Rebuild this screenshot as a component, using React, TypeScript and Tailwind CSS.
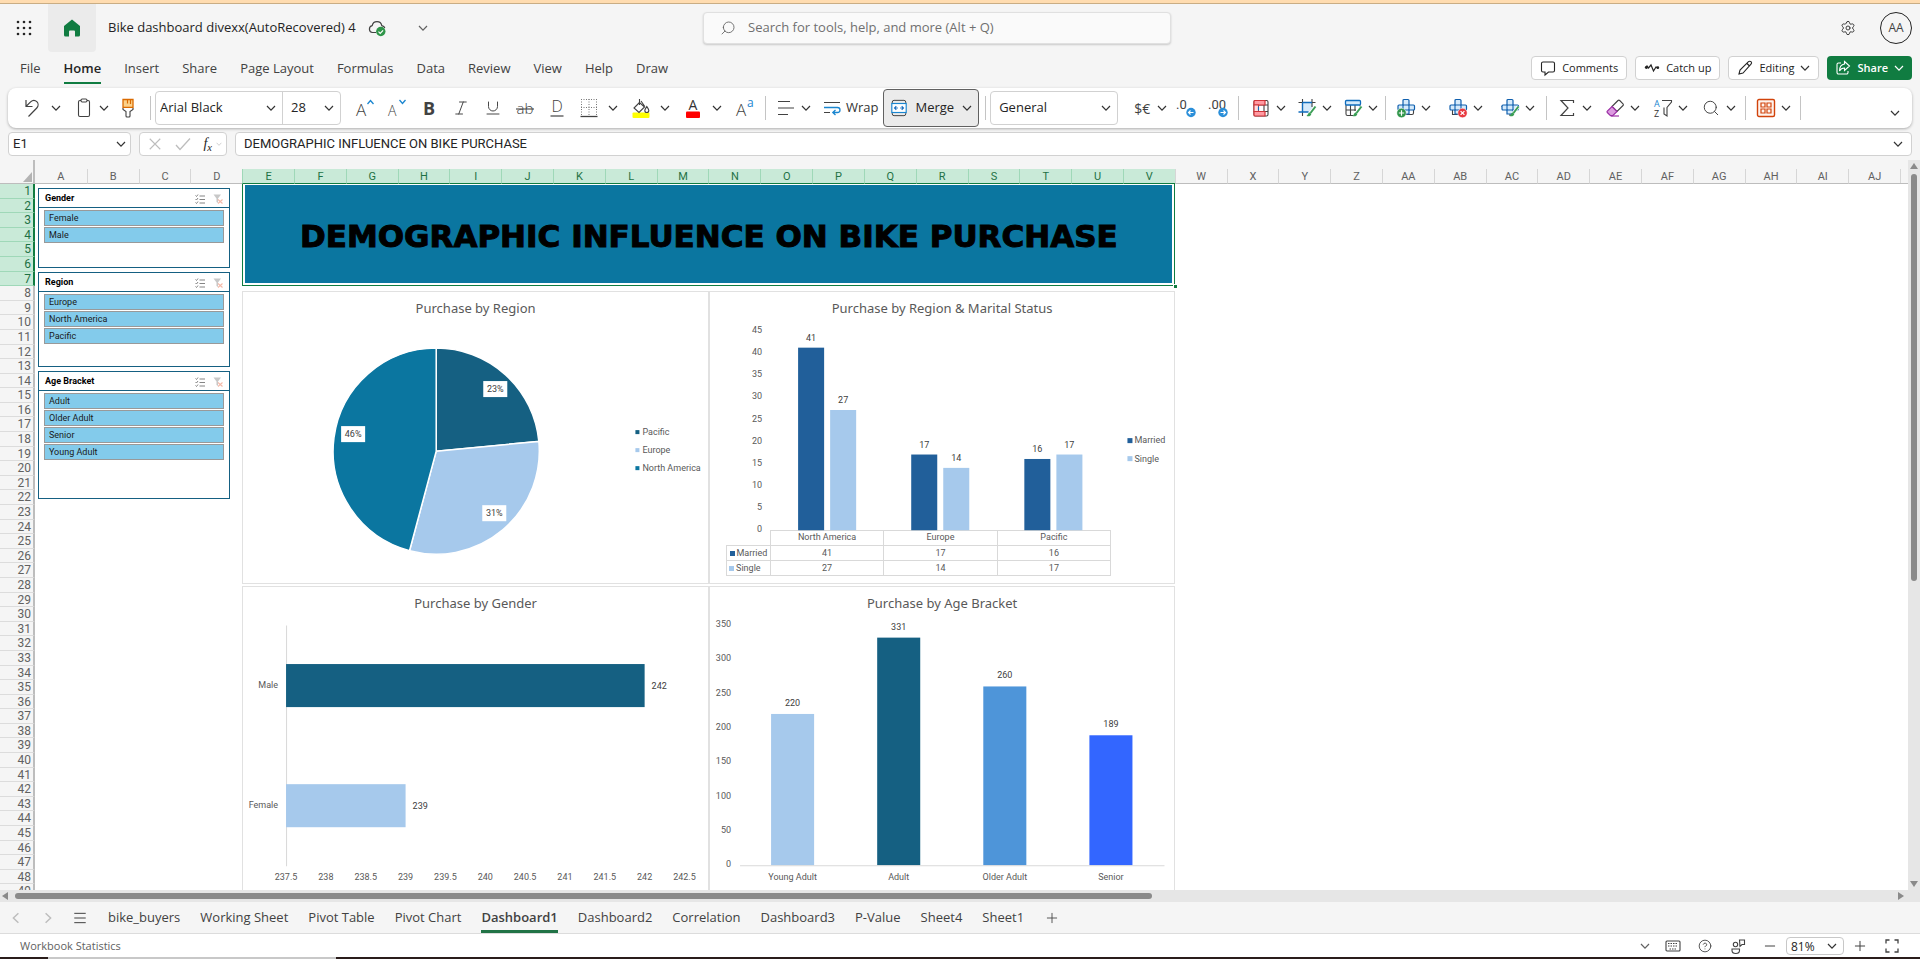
import type { ReactNode } from "react";
import { CircleHelp, Italic, Menu, Minus, Plus, Search, Settings, Underline } from "lucide-react";

const COLUMNS = [
  ..."ABCDEFGHIJKLMNOPQRSTUVWXYZ".split(""),
  ..."ABCDEFGHIJ".split("").map((c) => "A" + c),
];
const ROWS = Array.from({ length: 49 }, (_, i) => i + 1);
const MENU = ["File", "Home", "Insert", "Share", "Page Layout", "Formulas", "Data", "Review", "View", "Help", "Draw"];
const SHEETS = [
  "bike_buyers", "Working Sheet", "Pivot Table", "Pivot Chart", "Dashboard1", "Dashboard2",
  "Correlation", "Dashboard3", "P-Value", "Sheet4", "Sheet1",
];

/* ---------- icons ---------- */

function Icon({ children, className = "size-5", box = 20 }: { children: ReactNode; className?: string; box?: number }) {
  return (
    <svg viewBox={`0 0 ${box} ${box}`} className={`shrink-0 overflow-visible ${className}`} fill="none" stroke="#424242" strokeWidth="1.1" aria-hidden="true">
      {children}
    </svg>
  );
}

function Chevron({ className = "size-[10px] text-[#333]" }: { className?: string }) {
  return (
    <svg viewBox="0 0 10 10" className={`shrink-0 ${className}`} fill="none" stroke="currentColor" strokeWidth="1.2" aria-hidden="true">
      <path d="M1 3l4 4.2L9 3" />
    </svg>
  );
}

const UndoIcon = () => (
  <Icon>
    <path d="M4 2v6.500h6.500M4.200 8.200l4.400-4.300c2-1.900 4.600-1.800 6.200-.2 1.700 1.700 1.700 4.500 0 6.300L6.500 18.500" strokeWidth="1.200" />
  </Icon>
);
const PasteIcon = () => (
  <Icon>
    <rect x="4.500" y="2.500" width="11" height="16" rx="1.500" />
    <rect x="7" y="1" width="6" height="3" rx="1.200" fill="#fff" />
  </Icon>
);
const PainterIcon = () => (
  <Icon>
    <path d="M5 1.500h10v8H5z" fill="#fbd28b" stroke="#da6a00" strokeWidth="1.300" />
    <path d="M9.500 2v3.500M12.500 2v4" stroke="#da6a00" strokeWidth="1.200" />
    <path d="M5 10v1.500l3 2V18a1 1 0 001 1h2a1 1 0 001-1v-4.500l3-2V10" fill="#fff" />
  </Icon>
);
const BordersIcon = () => (
  <Icon>
    <path d="M2 1.500h16M2 9.500h16M2.500 1v17M10 1v17M17.500 1v17" stroke="#777" strokeDasharray="1 1.500" strokeWidth="1" />
    <path d="M1.500 18.500h17" strokeWidth="1.300" />
  </Icon>
);
const BucketIcon = () => (
  <Icon>
    <rect x="1.500" y="14.500" width="17" height="5.500" rx="1" fill="#ffff00" stroke="none" />
    <path d="M8.500 4.500L3 10l5 4.500 5.500-5.500zM8.500 1v6M10 3l3.800 5.500" />
    <path d="M15.800 8.500c-1.300 2-2 3-2 4a2 2 0 004 0c0-1-.7-2-2-4z" fill="#fff" />
  </Icon>
);
const AlignIcon = () => (
  <Icon>
    <path d="M2 3.500h12M2 10h16M2 16.500h10" strokeWidth="1.200" />
  </Icon>
);
const WrapIcon = () => (
  <Icon>
    <path d="M2 4.500h16M2 14.500h6" />
    <path d="M2 9.500h13.500a2.500 2.500 0 010 5H11M13.500 12l-2.700 2.500 2.700 2.500" stroke="#1a86d0" strokeWidth="1.300" />
  </Icon>
);
const MergeIcon = () => (
  <Icon className="size-[18px]">
    <path d="M2.500 5V3.500a2 2 0 012-2h11a2 2 0 012 2V5M2.500 15v1.500a2 2 0 002 2h11a2 2 0 002-2V15" />
    <rect x="2" y="5" width="16" height="10" fill="#fff" stroke="#1a86d0" strokeWidth="1.300" />
    <path d="M5 10h3.700M11.300 10H15M7 8l-2 2 2 2M13 8l2 2-2 2" stroke="#1a6fc0" strokeWidth="1.200" />
  </Icon>
);
function DecimalIcon({ digits, right }: { digits: string; right?: boolean }) {
  return (
    <Icon>
      <text x="0" y="11" fontSize="13" fill="#424242" stroke="none" className="font-['Roboto',sans-serif]">{digits}</text>
      <circle cx="15" cy="14.500" r="4.700" fill="#2b8fd9" stroke="none" />
      <path d={right ? "M12.500 14.500h5M15.500 12.500l2 2-2 2" : "M17.500 14.500h-5M14.500 12.500l-2 2 2 2"} stroke="#fff" strokeWidth="1.100" />
    </Icon>
  );
}
const ConditionalIcon = () => (
  <Icon>
    <rect x="3" y="2.500" width="14" height="15.500" rx="1.500" />
    <path d="M3 7h14M3 13.500h14M13 7v6.500" />
    <path d="M3 3.500a1 1 0 011-1h10v4.500H3zM3 13.500h11V18H4a1 1 0 01-1-1z" fill="#ff9aa2" stroke="#d13438" strokeWidth="1.200" />
    <path d="M3 7h4.500v6.500H3z" fill="#ffdfe1" stroke="#d13438" />
    <path d="M7.500 8.500v4" stroke="#0f6cbd" />
  </Icon>
);
const Pencil = () => (
  <>
    <path d="M18.500 8.500L13 15.500" stroke="#fff" strokeWidth="3.500" />
    <path d="M18.500 8.500L13.500 15" stroke="#3a9e55" strokeWidth="2" />
    <path d="M13 14.500c-2 0-2 2.500-3.500 3.500 2 .8 4.500.3 4.800-2z" fill="#3a9e55" stroke="none" />
  </>
);
const StylesIcon = () => (
  <Icon>
    <rect x="5" y="5" width="10.500" height="9" fill="#d5eafb" stroke="none" />
    <path d="M5.500 1v17M15 1v8M1.500 4.500h17" />
    <path d="M1.500 14h10M5.500 4.500v9.500M5.500 4.500H15" stroke="#0f6cbd" strokeWidth="1.300" />
    <Pencil />
  </Icon>
);
const TableIcon = () => (
  <Icon>
    <path d="M3 7v9a1.500 1.500 0 001.500 1.500H10M7.500 7v10.500M12 7v6M3 12h10M17 7v2" />
    <rect x="2.500" y="2.500" width="15" height="4.500" rx="1" fill="#d5eafb" stroke="#0f6cbd" strokeWidth="1.300" />
    <Pencil />
  </Icon>
);
function CellsIcon({ kind }: { kind: "insert" | "delete" | "format" }) {
  return (
    <Icon>
      {kind !== "format" && <path d="M4.500 12v4.500H16a1.500 1.500 0 001.500-1.500V12M12 12v5" />}
      {kind === "format" && <path d="M1.500 8.500h17M10 12v6" />}
      <path d="M7 2.500a1 1 0 011-1h4a1 1 0 011 1V7h4.500a1 1 0 011 1v3a1 1 0 01-1 1H13v4H7v-4H3a1 1 0 01-1-1V8a1 1 0 011-1h4z" fill="#d5eafb" stroke="#0f5fae" strokeWidth="1.200" />
      <path d="M7 7h6v5H7z" stroke="#0f5fae" />
      {kind === "insert" && (
        <>
          <circle cx="5.500" cy="15" r="4.700" fill="#2f9549" stroke="#fff" strokeWidth=".5" />
          <path d="M5.500 12.300v5.400M2.800 15h5.400" stroke="#fff" strokeWidth="1.200" />
        </>
      )}
      {kind === "delete" && (
        <>
          <circle cx="14.500" cy="15" r="4.700" fill="#e8383f" stroke="#fff" strokeWidth=".5" />
          <path d="M12.600 13.100l3.800 3.800M16.400 13.100l-3.800 3.800" stroke="#fff" strokeWidth="1.200" />
        </>
      )}
      {kind === "format" && <Pencil />}
    </Icon>
  );
}
const SigmaIcon = () => (
  <Icon>
    <path d="M16.500 5V2.500H4l7 7.500-7 7.500h12.500V15" strokeWidth="1.200" />
  </Icon>
);
const EraserIcon = () => (
  <Icon>
    <path d="M7 8.500L13 2.500a1.200 1.200 0 011.700 0l3.300 3.300a1.200 1.200 0 010 1.700l-6 6z" fill="#fff" />
    <path d="M7 8.500l5 5-4.300 4.200H5.500L2.300 14.500a1 1 0 010-1.400z" fill="#dc9be0" stroke="#9b2fa5" strokeWidth="1.200" />
    <path d="M6 18h8" stroke="#9b2fa5" strokeWidth="1.200" />
  </Icon>
);
const SortFilterIcon = () => (
  <Icon>
    <path d="M9 2.500h9.500v1.500l-4.500 5.500V18l-3-2V9.500" />
    <text x="1" y="8.500" fontSize="9" fill="#1a86d0" stroke="none">A</text>
    <text x="1" y="19" fontSize="9" fill="#333" stroke="none">Z</text>
  </Icon>
);
const AddinsIcon = () => (
  <Icon>
    <rect x="1.500" y="1.500" width="17" height="17" rx="1.500" fill="#fff4ee" stroke="#d1430b" strokeWidth="1.400" />
    <path d="M5 5h4v4H5zM11 5h4v4h-4zM5 11h4v4H5zM11 11h4v4h-4z" stroke="#d1430b" strokeWidth="1.200" />
  </Icon>
);

/* ---------- ribbon pieces ---------- */

function Tool({ label, children }: { label: string; children: ReactNode }) {
  return (
    <button type="button" aria-label={label} className="flex h-8 w-8 items-center justify-center text-[#424242]">
      {children}
    </button>
  );
}

function SplitTool({ label, children, wide }: { label: string; children: ReactNode; wide?: boolean }) {
  return (
    <button type="button" aria-label={label} className="flex h-8 items-center">
      <span className={`flex justify-center ${wide ? "w-8" : "w-6"}`}>{children}</span>
      <span className="flex w-4 justify-center"><Chevron /></span>
    </button>
  );
}

const Separator = () => <span className="h-6 w-px shrink-0 bg-[#c4c4c4]" />;

function Dropdown({ label, value, className }: { label: string; value: string; className: string }) {
  return (
    <div className={`relative flex items-center ${className}`}>
      <select aria-label={label} className="h-full w-full appearance-none bg-transparent text-[#242424] outline-none" defaultValue={value}>
        <option>{value}</option>
      </select>
      <span className="pointer-events-none absolute right-1.5"><Chevron /></span>
    </div>
  );
}

function Ribbon() {
  return (
    <div className="mx-2 flex h-10 items-center rounded-lg bg-white text-[13px] shadow-[0_1px_3px_rgba(0,0,0,0.3)]" role="toolbar" aria-label="Home">
      <div className="flex items-center pr-1.5 pl-2">
        <SplitTool label="Undo" wide><UndoIcon /></SplitTool>
        <span className="w-2" />
        <SplitTool label="Paste"><PasteIcon /></SplitTool>
        <Tool label="Format painter"><PainterIcon /></Tool>
      </div>
      <Separator />
      <div className="ml-1 flex h-[34px] rounded border border-[#d1d1d1]">
        <Dropdown label="Font" value="Arial Black" className="w-[127px] border-r border-[#d1d1d1] pl-1" />
        <Dropdown label="Font size" value="28" className="w-[57px] pl-2" />
      </div>
      <div className="flex items-center pl-2">
        <Tool label="Grow font">
          <Icon>
            <text x="1" y="18" fontSize="17" fill="#424242" stroke="none" className="font-light">A</text>
            <path d="M12.500 6l3-3.500 3 3.500" stroke="#1a86d0" strokeWidth="1.300" />
          </Icon>
        </Tool>
        <Tool label="Shrink font">
          <Icon>
            <text x="1" y="18" fontSize="14" fill="#424242" stroke="none" className="font-light">A</text>
            <path d="M12.500 2l3 3.500 3-3.500" stroke="#1a86d0" strokeWidth="1.300" />
          </Icon>
        </Tool>
        <Tool label="Bold"><span className="text-lg leading-none font-bold">B</span></Tool>
        <Tool label="Italic"><Italic className="size-[18px]" strokeWidth={1.3} /></Tool>
        <Tool label="Underline"><Underline className="size-[18px]" strokeWidth={1.3} /></Tool>
        <Tool label="Strikethrough">
          <Icon>
            <text x="1.500" y="15.500" fontSize="15" fill="#424242" stroke="none" className="font-light">ab</text>
            <path d="M1 11h18" />
          </Icon>
        </Tool>
        <Tool label="Double underline">
          <Icon>
            <text x="4.500" y="14" fontSize="16" fill="#424242" stroke="none" className="font-light">D</text>
            <path d="M3.500 18h13" strokeWidth="1.200" />
          </Icon>
        </Tool>
        <div className="flex gap-1 pr-1">
          <SplitTool label="Borders" wide><BordersIcon /></SplitTool>
          <SplitTool label="Fill colour" wide><BucketIcon /></SplitTool>
          <SplitTool label="Font colour" wide>
            <Icon>
              <text x="5.500" y="11.500" fontSize="14" fill="#333" stroke="none">A</text>
              <rect x="3" y="13.500" width="14" height="6.500" rx="1" fill="#ff0000" stroke="none" />
            </Icon>
          </SplitTool>
        </div>
        <Tool label="Change case">
          <Icon>
            <text x="1" y="18" fontSize="17" fill="#424242" stroke="none" className="font-light">A</text>
            <text x="12" y="9" fontSize="12" fill="#1a86d0" stroke="none">a</text>
          </Icon>
        </Tool>
      </div>
      <span className="w-1" />
      <Separator />
      <div className="flex items-center gap-2 pl-2">
        <SplitTool label="Align"><AlignIcon /></SplitTool>
        <button type="button" className="flex items-center gap-1 text-[#333]"><WrapIcon />Wrap</button>
      </div>
      <button type="button" className="ml-1 flex h-[38px] items-center gap-2 rounded border border-[#616161] bg-[#ebebeb] px-1.5 text-[#242424]">
        <MergeIcon />Merge<Chevron />
      </button>
      <span className="w-1.5" />
      <Separator />
      <Dropdown label="Number format" value="General" className="ml-1 h-[34px] w-[128px] rounded border border-[#d1d1d1] pl-2" />
      <div className="flex items-center pl-3">
        <SplitTool label="Currency"><span className="text-[14px] text-[#424242]">$€</span></SplitTool>
        <Tool label="Decrease decimal"><DecimalIcon digits=".0" /></Tool>
        <Tool label="Increase decimal"><DecimalIcon digits=".00" right /></Tool>
      </div>
      <span className="w-1" />
      <Separator />
      <div className="flex items-center gap-1.5 pr-1 pl-2.5">
        <SplitTool label="Conditional formatting"><ConditionalIcon /></SplitTool>
        <SplitTool label="Cell styles"><StylesIcon /></SplitTool>
        <SplitTool label="Format as table"><TableIcon /></SplitTool>
      </div>
      <Separator />
      <div className="flex items-center gap-3 px-2">
        <SplitTool label="Insert cells"><CellsIcon kind="insert" /></SplitTool>
        <SplitTool label="Delete cells"><CellsIcon kind="delete" /></SplitTool>
        <SplitTool label="Format cells"><CellsIcon kind="format" /></SplitTool>
      </div>
      <Separator />
      <div className="flex items-center gap-2 pr-1.5 pl-2">
        <SplitTool label="AutoSum"><SigmaIcon /></SplitTool>
        <SplitTool label="Clear"><EraserIcon /></SplitTool>
        <SplitTool label="Sort and filter"><SortFilterIcon /></SplitTool>
        <SplitTool label="Find"><Search className="size-[18px] text-[#424242]" strokeWidth={1.3} /></SplitTool>
      </div>
      <Separator />
      <div className="flex items-center pr-1.5 pl-2">
        <SplitTool label="Add-ins"><AddinsIcon /></SplitTool>
      </div>
      <Separator />
      <button type="button" aria-label="Ribbon options" className="mr-3 ml-auto self-end pb-2.5"><Chevron /></button>
    </div>
  );
}

function TopBar() {
  return (
    <header className="flex h-12 items-center">
      <div className="flex h-full w-[703px] items-center">
        <button type="button" aria-label="App launcher" className="flex w-12 justify-center">
          <Icon className="size-4" box={16}>
            {[2, 8, 14].map((y) => [2, 8, 14].map((x) => <circle key={`${x}-${y}`} cx={x} cy={y} r="1.3" fill="#242424" stroke="none" />))}
          </Icon>
        </button>
        <button type="button" aria-label="Home" className="flex h-full w-12 items-center justify-center rounded-b bg-[#ebebeb]">
          <Icon className="size-5">
            <path d="M10 1.500l8 6.500v9a1.500 1.500 0 01-1.500 1.500H13v-5a1 1 0 00-1-1H8a1 1 0 00-1 1v5H3.500A1.500 1.500 0 012 17V8z" fill="#107c41" stroke="none" />
          </Icon>
        </button>
        <span className="ml-3 text-[13px] text-[#242424]">Bike dashboard divexx(AutoRecovered) 4</span>
        <span className="ml-3">
          <Icon className="size-[18px]" box={18}>
            <path d="M8 13.500H4.500a3.500 3.500 0 01-.3-6.900 4.900 4.900 0 019.600 0c1.500.2 2.700 1.200 3 2.400" strokeWidth="1.200" />
            <circle cx="12.800" cy="12.500" r="4.700" fill="#2f9549" stroke="none" />
            <path d="M10.500 12.600l1.700 1.700 2.900-3" stroke="#fff" strokeWidth="1.200" />
          </Icon>
        </span>
        <button type="button" aria-label="File details" className="ml-8"><Chevron className="size-[10px] text-[#616161]" /></button>
      </div>
      <label className="flex h-8 w-[468px] items-center gap-3 rounded border border-[#e0e0e0] bg-[#fafafa] pl-4 shadow-[0_1px_2px_rgba(0,0,0,0.18)]">
        <Search className="size-4 -scale-x-100 text-[#616161]" strokeWidth={1.3} />
        <input type="text" aria-label="Search" placeholder="Search for tools, help, and more (Alt + Q)" className="flex-1 bg-transparent text-[13px] outline-none placeholder:text-[#707070]" />
      </label>
      <div className="mr-2 ml-auto flex items-center gap-6">
        <button type="button" aria-label="Settings"><Settings className="size-4 text-[#333]" strokeWidth={1.4} /></button>
        <button type="button" className="size-8 rounded-full border border-[#242424] text-[12px] text-[#424242]">AA</button>
      </div>
    </header>
  );
}

const actionClass = "flex h-6 items-center gap-1.5 rounded border border-[#d1d1d1] bg-white px-2 text-[11px] font-medium text-[#242424]";

function MenuRow() {
  return (
    <div className="flex h-9 items-start justify-between pt-1 pr-2 pl-5">
      <nav className="flex gap-[23px] text-[13px] leading-6">
        {MENU.map((m) => (
          <a
            key={m}
            href={"#" + m}
            className={m === "Home" ? "border-b-2 border-[#107c41] pb-0.5 font-semibold text-[#242424]" : "border-b-2 border-transparent pb-0.5 text-[#424242]"}
          >
            {m}
          </a>
        ))}
      </nav>
      <div className="flex gap-2">
        <button type="button" className={actionClass}>
          <Icon className="size-4" box={16}>
            <path d="M3 2h10a1.500 1.500 0 011.500 1.500v7A1.500 1.500 0 0113 12H8.500L5 15v-3H3a1.500 1.500 0 01-1.500-1.500v-7A1.500 1.500 0 013 2z" stroke="#242424" />
          </Icon>
          Comments
        </button>
        <button type="button" className={actionClass}>
          <Icon className="size-4" box={16}>
            <path d="M1 8l2-2 1.500 2L7 5l2.500 6L12 7l2 1" stroke="#242424" strokeWidth="1.200" />
            <circle cx="2.500" cy="7.500" r="1.400" fill="#242424" stroke="none" />
            <circle cx="13.800" cy="7.700" r="1.400" fill="#242424" stroke="none" />
          </Icon>
          Catch up
        </button>
        <button type="button" className={actionClass}>
          <Icon className="size-4" box={16}>
            <path d="M2 14l1-4L11.500 1.700a1.600 1.600 0 012.500 2.500L6 13zM10 3.500l2.500 2.500" stroke="#242424" />
          </Icon>
          Editing
          <Chevron />
        </button>
        <button type="button" className="flex h-6 items-center gap-1.5 rounded bg-[#107c41] px-2 text-[11px] font-semibold text-white">
          <Icon className="size-4" box={16}>
            <path d="M6 3H3.500A1.500 1.500 0 002 4.500v8A1.500 1.500 0 003.500 14h8a1.500 1.500 0 001.500-1.500V11M9.500 1.500L14.500 6l-5 4.500V8C7 8 5.500 9 4.500 11c0-4 2-6.500 5-7z" stroke="#fff" />
          </Icon>
          Share
          <Chevron className="size-[10px] text-white" />
        </button>
      </div>
    </div>
  );
}

function FormulaBar() {
  return (
    <div className="mx-2 mt-1 mb-1 flex h-6 items-stretch text-[13px] text-[#242424]">
      <div className="flex w-[123px] items-center rounded border border-[#d1d1d1] bg-white pr-1 pl-1">
        <input type="text" aria-label="Name box" defaultValue="E1" className="w-full min-w-0 bg-transparent font-['Roboto',sans-serif] outline-none" />
        <Chevron />
      </div>
      <div className="ml-2 flex w-[88px] items-center justify-between rounded border border-[#d1d1d1] bg-white pr-1 pl-2">
        <Icon className="size-[14px]" box={16}><path d="M2 2l12 12M14 2L2 14" stroke="#bdbdbd" strokeWidth="1.300" /></Icon>
        <Icon className="size-4" box={16}><path d="M1 9l4 4.500L15 2.500" stroke="#bdbdbd" strokeWidth="1.300" /></Icon>
        <span className="flex items-center gap-1">
          <i className="font-['Liberation_Serif',serif] text-[14px] leading-5">f<sub>x</sub></i>
          <Chevron className="size-[6px] text-[#bdbdbd]" />
        </span>
      </div>
      <div className="ml-2 flex flex-1 items-center rounded border border-[#d1d1d1] bg-white pr-2 pl-2">
        <input type="text" aria-label="Formula" defaultValue="DEMOGRAPHIC INFLUENCE ON BIKE PURCHASE" className="w-full bg-transparent font-['Roboto',sans-serif] outline-none" />
        <Chevron />
      </div>
    </div>
  );
}

/* ---------- sheet contents ---------- */

function Slicer({ title, items, className }: { title: string; items: string[]; className: string }) {
  return (
    <section className={`border border-[#156082] bg-white ${className}`}>
      <h3 className="flex h-[19px] items-center border-b border-[#156082] pt-px pl-1.5 font-bold text-black">
        <span className="flex-1">{title}</span>
        <Icon className="mr-2 size-[10px]" box={10}>
          <path d="M.5 1.500l1 1L3 .5M.5 5l1 1L3 4M.5 8.500l1 1L3 7.500M4.500 2H10M4.500 5.500H10M4.500 9H10" stroke="#777" strokeWidth=".9" />
        </Icon>
        <Icon className="mr-1.5 size-[10px]" box={10}>
          <path d="M.5.5h7.500L5 4.500V9L3.500 8V4.500z" fill="#c8c8c8" stroke="none" />
          <path d="M5 5.500L9.500 9.500M9.500 5.500L5 9.500" stroke="#f4b9a8" strokeWidth="1.100" />
        </Icon>
      </h3>
      <div className="flex flex-col gap-px px-[5px] pt-0.5">
        {items.map((i) => (
          <button key={i} type="button" className="h-4 border border-[#999] bg-[#83cbeb] pl-1 text-left leading-[14px] text-[#1a1a1a]">{i}</button>
        ))}
      </div>
    </section>
  );
}

function Chart({ title, children }: { title: string; children: ReactNode }) {
  return (
    <section className="border border-[#e1e1e1] bg-white">
      <h2 className="pt-1 pb-1 text-center font-['Noto_Sans',sans-serif] text-[13px] leading-6 text-[#595959]">{title}</h2>
      {children}
    </section>
  );
}

const PLOT = "block w-full overflow-visible font-['Roboto',sans-serif] text-[9px]";
const GREY = "#595959";
const DARK = "#404040";

function RegionPie() {
  const cx = 193, cy = 127, r = 103;
  const at = (deg: number) => {
    const a = (deg * Math.PI) / 180;
    return `${cx + r * Math.sin(a)} ${cy - r * Math.cos(a)}`;
  };
  const slices = [
    { from: 0, to: 84.6, fill: "#156082", label: "23%", x: 252, y: 65 },
    { from: 84.6, to: 195, fill: "#a6c9ec", label: "31%", x: 251, y: 189 },
    { from: 195, to: 360, fill: "#0b76a0", label: "46%", x: 110, y: 110 },
  ];
  const legend = [["Pacific", "#156082"], ["Europe", "#a6c9ec"], ["North America", "#0b76a0"]];
  return (
    <svg viewBox="0 0 464 259" className={PLOT} role="img" aria-label="Purchase by Region">
      {slices.map((s) => (
        <path key={s.label} d={`M${cx} ${cy}L${at(s.from)}A${r} ${r} 0 0 1 ${at(s.to)}Z`} fill={s.fill} stroke="#fff" strokeWidth="1.5" />
      ))}
      {slices.map((s) => (
        <g key={s.label}>
          <rect x={s.x - 12} y={s.y - 8} width="24" height="16" fill="#fff" />
          <text x={s.x} y={s.y + 3} textAnchor="middle" fill={DARK}>{s.label}</text>
        </g>
      ))}
      {legend.map(([name, fill], i) => (
        <g key={name}>
          <rect x="392" y={106 + i * 18} width="4" height="4" fill={fill} />
          <text x="399" y={111 + i * 18} fill={GREY}>{name}</text>
        </g>
      ))}
    </svg>
  );
}

const MARITAL = [
  { region: "North America", married: 41, single: 27, x: 88 },
  { region: "Europe", married: 17, single: 14, x: 201 },
  { region: "Pacific", married: 16, single: 17, x: 314 },
];
const MARRIED = "#215f9a";
const SINGLE = "#a6c9ec";

function MaritalBars() {
  const base = 206, unit = 4.448;
  return (
    <>
      <svg viewBox="0 0 464 206" className={PLOT} role="img" aria-label="Purchase by Region and Marital Status">
        {Array.from({ length: 10 }, (_, i) => (
          <text key={i} x="52" y={208 - i * 22.1} textAnchor="end" fill={GREY}>{i * 5}</text>
        ))}
        {MARITAL.map((m) => (
          <g key={m.region}>
            <rect x={m.x} y={base - m.married * unit} width="26" height={m.married * unit} fill={MARRIED} />
            <rect x={m.x + 32} y={base - m.single * unit} width="26" height={m.single * unit} fill={SINGLE} />
            <text x={m.x + 13} y={base - m.married * unit - 7} textAnchor="middle" fill={DARK}>{m.married}</text>
            <text x={m.x + 45} y={base - m.single * unit - 7} textAnchor="middle" fill={DARK}>{m.single}</text>
          </g>
        ))}
        <rect x="417" y="114" width="5" height="5" fill={MARRIED} />
        <text x="424" y="119" fill={GREY}>Married</text>
        <rect x="417" y="132" width="5" height="5" fill={SINGLE} />
        <text x="424" y="138" fill={GREY}>Single</text>
      </svg>
      <table className="ml-[3.5%] w-[82.9%] table-fixed border-collapse text-center text-[9px] leading-[14px] text-[#595959]">
        <thead>
          <tr>
            <td className="w-[11.4%]" />
            {MARITAL.map((m) => <th key={m.region} scope="col" className="border border-[#d9d9d9] p-0 pb-0.5 leading-3 font-normal">{m.region}</th>)}
          </tr>
        </thead>
        <tbody>
          <tr>
            <th scope="row" className="border border-[#d9d9d9] p-0 font-normal whitespace-nowrap"><span className="mr-0.5 inline-block size-[5px] bg-[#215f9a]" />Married</th>
            {MARITAL.map((m) => <td key={m.region} className="border border-[#d9d9d9] p-0">{m.married}</td>)}
          </tr>
          <tr>
            <th scope="row" className="border border-[#d9d9d9] p-0 pl-0.5 text-left font-normal whitespace-nowrap"><span className="mr-0.5 inline-block size-[5px] bg-[#a6c9ec]" />Single</th>
            {MARITAL.map((m) => <td key={m.region} className="border border-[#d9d9d9] p-0">{m.single}</td>)}
          </tr>
        </tbody>
      </table>
    </>
  );
}

function GenderBars() {
  const x0 = 43, step = 39.8;
  const bars = [
    { name: "Male", value: 242, y: 45, fill: "#156082" },
    { name: "Female", value: 239, y: 165, fill: "#a6c9ec" },
  ];
  return (
    <svg viewBox="0 0 464 272" className={PLOT} role="img" aria-label="Purchase by Gender">
      <path d={`M${x0}.5 6.500V247`} stroke="#d9d9d9" />
      {bars.map((b) => {
        const w = (b.value - 237.5) * 2 * step;
        return (
          <g key={b.name}>
            <rect x={x0} y={b.y} width={w} height="43" fill={b.fill} />
            <text x="35" y={b.y + 24} textAnchor="end" fill={GREY}>{b.name}</text>
            <text x={x0 + w + 7} y={b.y + 25} fill={DARK}>{b.value}</text>
          </g>
        );
      })}
      {Array.from({ length: 11 }, (_, i) => (
        <text key={i} x={x0 + i * step} y="261" textAnchor="middle" fill={GREY}>{237.5 + i * 0.5}</text>
      ))}
    </svg>
  );
}

function AgeBars() {
  const base = 246, unit = 0.687;
  const bars = [
    { name: "Young Adult", value: 220, fill: "#a6c9ec" },
    { name: "Adult", value: 331, fill: "#156082" },
    { name: "Older Adult", value: 260, fill: "#4e95d9" },
    { name: "Senior", value: 189, fill: "#3366ff" },
  ];
  return (
    <svg viewBox="0 0 464 272" className={PLOT} role="img" aria-label="Purchase by Age Bracket">
      {Array.from({ length: 8 }, (_, i) => (
        <text key={i} x="21" y={248 - i * 34.3} textAnchor="end" fill={GREY}>{i * 50}</text>
      ))}
      {bars.map((b, i) => {
        const x = 61 + i * 106, h = b.value * unit;
        return (
          <g key={b.name}>
            <rect x={x} y={base - h} width="43" height={h} fill={b.fill} />
            <text x={x + 21.5} y={base - h - 8} textAnchor="middle" fill={DARK}>{b.value}</text>
            <text x={x + 21.5} y="261" textAnchor="middle" fill={GREY}>{b.name}</text>
          </g>
        );
      })}
      <path d={`M30 ${base}.5H454`} stroke="#d9d9d9" />
    </svg>
  );
}

function SheetContent() {
  return (
    <div className="grid min-w-0 flex-1 grid-cols-[repeat(36,minmax(0,1fr))] content-start overflow-hidden bg-white pr-[7px]">
      <div className="col-span-4 flex flex-col gap-1 pt-1 pr-3 pl-[3px] text-[9px]">
        <Slicer title="Gender" items={["Female", "Male"]} className="h-20" />
        <Slicer title="Region" items={["Europe", "North America", "Pacific"]} className="h-[95px]" />
        <Slicer title="Age Bracket" items={["Adult", "Older Adult", "Senior", "Young Adult"]} className="h-32" />
      </div>
      <div className="col-span-18">
        <div className="relative h-[102px] border border-t-0 border-[#107c41] bg-white p-0.5 pt-px">
          <h1 className="flex h-full items-center justify-center bg-[#0b76a0] pt-1 font-['DejaVu_Sans',sans-serif] text-[31px] leading-10 font-bold whitespace-nowrap text-black [-webkit-text-stroke:1px_black]">
            DEMOGRAPHIC INFLUENCE ON BIKE PURCHASE
          </h1>
          <span className="absolute -right-1 -bottom-1 size-[5px] border border-white bg-[#107c41]" />
        </div>
        <div className="mt-[5px] grid grid-cols-2 gap-y-0.5">
          <Chart title="Purchase by Region"><RegionPie /></Chart>
          <Chart title="Purchase by Region &amp; Marital Status"><MaritalBars /></Chart>
          <Chart title="Purchase by Gender"><GenderBars /></Chart>
          <Chart title="Purchase by Age Bracket"><AgeBars /></Chart>
        </div>
      </div>
    </div>
  );
}

function Grid() {
  const selected = (i: number) => i >= 4 && i <= 21;
  return (
    <div className="flex min-w-0 flex-1 flex-col font-['Roboto',sans-serif]">
      <div className="flex h-6 shrink-0">
        <div className="flex w-[35px] shrink-0 items-end justify-end border-r-2 border-b border-[#bdbdbd] pb-px">
          <Icon className="size-[10px]" box={10}><path d="M9 0v10H0z" fill="#b3b3b3" stroke="none" /></Icon>
        </div>
        <div className="flex flex-1 items-end border-b border-[#bdbdbd] pr-[7px]">
          <div className="-mb-px grid flex-1 grid-cols-[repeat(36,minmax(0,1fr))] text-center text-[11px] leading-[13px]">
            {COLUMNS.map((c, i) => (
              <div
                key={c}
                className={selected(i) ? "border-b border-l border-b-[#107c41] border-l-[#9fd8b8] bg-[#c9ead8] pt-px text-[#1e7145]" : i === 0 ? "border-b border-[#bdbdbd] pt-px text-[#616161]" : "border-b border-l border-b-[#bdbdbd] border-l-[#d6d6d6] pt-px text-[#616161]"}
              >
                {c}
              </div>
            ))}
          </div>
          <span className="h-[14px] w-px bg-[#d6d6d6]" />
        </div>
      </div>
      <div className="flex min-h-0 flex-1 overflow-hidden">
        <div className="grid h-[715px] w-[35px] shrink-0 grid-rows-[repeat(49,minmax(0,1fr))] text-right text-[12px] leading-[14px]">
          {ROWS.map((r) => (
            <div
              key={r}
              className={r <= 7 ? "border-r-2 border-b border-r-[#107c41] border-b-[#9fd8b8] bg-[#c9ead8] pr-0.5 text-[#1e7145]" : "border-r-2 border-b border-r-[#bdbdbd] border-b-[#dcdcdc] pr-0.5 text-[#616161]"}
            >
              {r}
            </div>
          ))}
        </div>
        <SheetContent />
      </div>
    </div>
  );
}

function Arrow({ d }: { d: string }) {
  return <svg viewBox="0 0 8 8" className="size-2 shrink-0" fill="#8a8a8a" aria-hidden="true"><path d={d} /></svg>;
}

export default function App() {
  return (
    <div className="flex h-screen flex-col overflow-hidden bg-[#f5f5f5] font-['Open_Sans',sans-serif]">
      <div className="h-1 shrink-0 border-b border-[#c9ad84] bg-[#ffdcb0]" />
      <TopBar />
      <MenuRow />
      <Ribbon />
      <FormulaBar />
      <main className="flex min-h-0 flex-1">
        <Grid />
        <div className="flex w-3 shrink-0 flex-col items-center gap-1 bg-[#e6e6e6] py-0.5">
          <Arrow d="M4 1l4 6H0z" />
          <div className="h-[56%] w-1.5 rounded-full bg-[#8a8a8a]" />
          <span className="mt-auto flex"><Arrow d="M0 1h8L4 7z" /></span>
        </div>
      </main>
      <div className="flex h-3 shrink-0 items-center bg-[#e6e6e6] pr-[15px] pl-px">
        <Arrow d="M7 0v8L1 4z" />
        <div className="ml-1.5 h-1.5 w-[59.7%] rounded-full bg-[#8a8a8a]" />
        <span className="ml-auto flex"><Arrow d="M1 0v8l6-4z" /></span>
      </div>
      <div className="flex h-8 shrink-0 items-stretch border-b border-[#dcdcdc] pl-2.5 text-[13px] text-[#424242]">
        <button type="button" aria-label="Previous sheets" className="w-3"><Chevron className="size-3 rotate-90 text-[#bdbdbd]" /></button>
        <button type="button" aria-label="Next sheets" className="ml-5 w-3"><Chevron className="size-3 -rotate-90 text-[#bdbdbd]" /></button>
        <button type="button" aria-label="All sheets" className="mr-5 ml-[18px]"><Menu className="size-4" strokeWidth={1.5} /></button>
        <div className="flex gap-5">
          {SHEETS.map((s) => (
            <button
              key={s}
              type="button"
              className={s === "Dashboard1" ? "border-b-3 border-[#217346] pt-[3px] font-semibold" : "border-b-3 border-transparent pt-[3px]"}
            >
              {s}
            </button>
          ))}
        </div>
        <button type="button" aria-label="New sheet" className="ml-5"><Plus className="size-4" strokeWidth={1.3} /></button>
      </div>
      <footer className="flex h-[23px] shrink-0 items-center bg-white pt-px pr-5 pl-5 text-[11px] text-[#616161]">
        <span>Workbook Statistics</span>
        <div className="ml-auto flex items-center text-[#424242]">
          <Chevron className="size-[10px] text-[#616161]" />
          <Icon className="ml-[15px] size-4" box={16}>
            <rect x="1" y="3" width="14" height="10" rx="1" />
            <path d="M3 5.500h10M3 8h10M4.500 11h7" strokeDasharray="1.500 1" />
          </Icon>
          <CircleHelp className="ml-[17px] size-[14px]" strokeWidth={1.5} />
          <Icon className="ml-[18px] size-4" box={16}>
            <circle cx="5.500" cy="6.500" r="2.200" />
            <path d="M2 11h7.500v1.500C9.500 14.500 8 15.500 5.800 15.500S2 14.500 2 12.500zM9.500 2h5v4.500h-2.500l-2 1.800z" />
          </Icon>
          <button type="button" aria-label="Zoom out" className="ml-4"><Minus className="size-4" strokeWidth={1.5} /></button>
          <Dropdown label="Zoom" value="81%" className="ml-2 h-[18px] w-[58px] rounded border border-[#c8c8c8] pl-1 text-[12px]" />
          <button type="button" aria-label="Zoom in" className="ml-2"><Plus className="size-4" strokeWidth={1.5} /></button>
          <Icon className="ml-4 size-4" box={16}>
            <path d="M2 5.500V2h3.500M10.500 2H14v3.500M14 10.500V14h-3.500M5.500 14H2v-3.500" strokeWidth="1.300" />
          </Icon>
        </div>
      </footer>
      <div className="flex h-0.5 shrink-0 bg-[#2a1d1b]">
        <span className="ml-12 w-72 bg-[#c8c8c8]" />
      </div>
    </div>
  );
}
